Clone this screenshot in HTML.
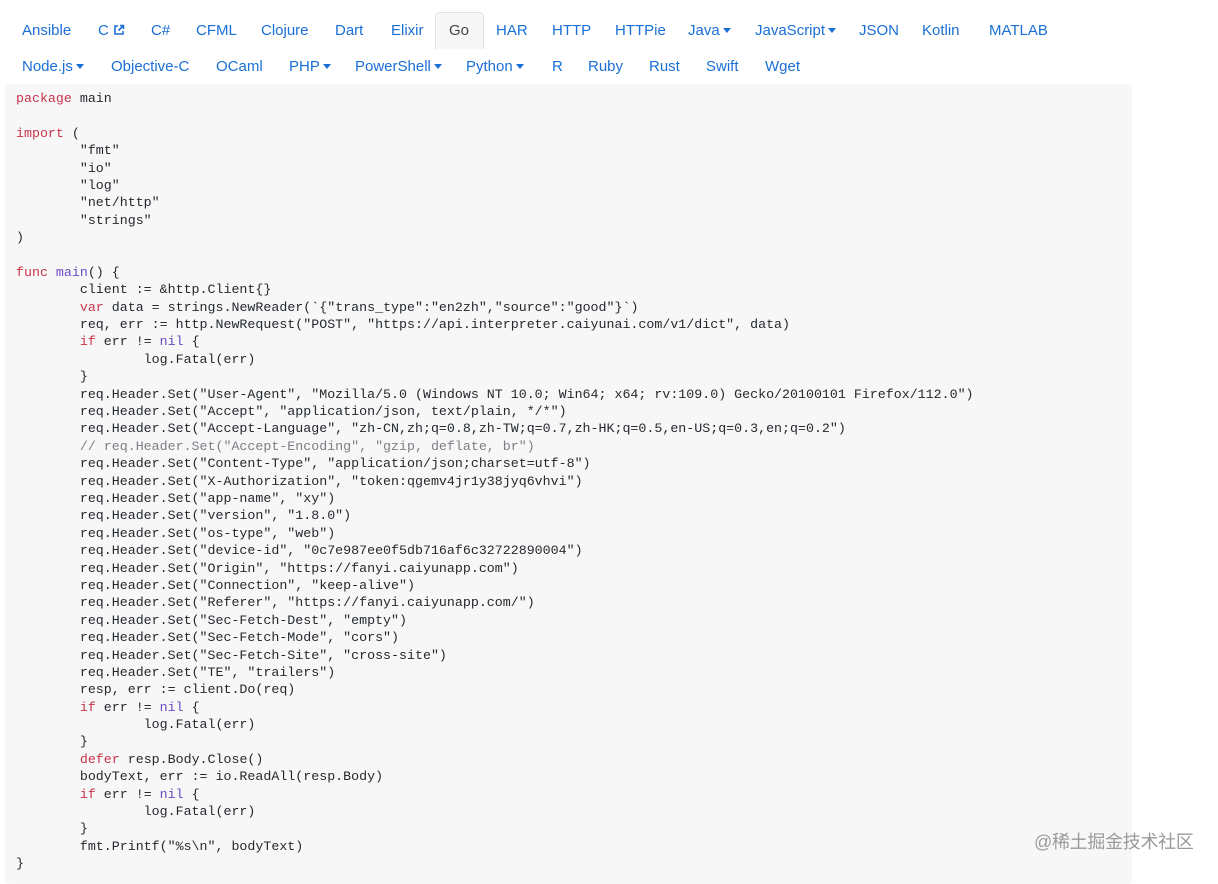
<!DOCTYPE html>
<html><head><meta charset="utf-8"><style>
body{margin:0;width:1218px;height:873px;background:#fff;overflow:hidden;position:relative;font-family:"Liberation Sans","Noto Sans CJK SC",sans-serif}
.n{position:absolute;font-size:15px;color:#1a6fd6;white-space:nowrap;line-height:18px}
.c{position:absolute;left:5px;top:84px;width:1127px;height:800px;background:#f7f7f7;border-radius:4px}
pre{position:absolute;left:16px;top:90px;margin:0;font-family:"Liberation Mono",monospace;font-size:13.3px;line-height:17.39px;color:#24292e;tab-size:8}
.k{color:#c7354a}.p{color:#6a4bc4}.m{color:#7a7f86}
.car{display:inline-block;width:0;height:0;border-left:4px solid transparent;border-right:4px solid transparent;border-top:5px solid #1a6fd6;vertical-align:middle;margin-left:3px;margin-top:-2px}
.go{position:absolute;left:435px;top:12px;width:47px;height:36px;background:#f7f7f7;border:1px solid #dee2e6;border-bottom:none;border-radius:5px 5px 0 0}
.wm{position:absolute;left:1034px;top:828px;font-size:18px;color:#9a9a9a;letter-spacing:-0.3px}
</style></head><body>
<div class="go"></div>
<div class="n" style="left:22px;top:22px">Ansible</div>
<div class="n" style="left:98px;top:22px">C <svg width="12" height="12" viewBox="0 0 12 12" style="vertical-align:-1px"><path d="M5 2H2v8h8V7" fill="none" stroke="#1a6fd6" stroke-width="1.6"/><path d="M7 1.5h3.5V5M10.5 1.5L5.5 6.5" fill="none" stroke="#1a6fd6" stroke-width="1.6"/></svg></div>
<div class="n" style="left:151px;top:22px">C#</div>
<div class="n" style="left:196px;top:22px">CFML</div>
<div class="n" style="left:261px;top:22px">Clojure</div>
<div class="n" style="left:335px;top:22px">Dart</div>
<div class="n" style="left:391px;top:22px">Elixir</div>
<div class="n" style="left:449px;top:22px;color:#444">Go</div>
<div class="n" style="left:496px;top:22px">HAR</div>
<div class="n" style="left:552px;top:22px">HTTP</div>
<div class="n" style="left:615px;top:22px">HTTPie</div>
<div class="n" style="left:688px;top:22px">Java<span class="car"></span></div>
<div class="n" style="left:755px;top:22px">JavaScript<span class="car"></span></div>
<div class="n" style="left:859px;top:22px">JSON</div>
<div class="n" style="left:922px;top:22px">Kotlin</div>
<div class="n" style="left:989px;top:22px">MATLAB</div>
<div class="n" style="left:22px;top:58px">Node.js<span class="car"></span></div>
<div class="n" style="left:111px;top:58px">Objective-C</div>
<div class="n" style="left:216px;top:58px">OCaml</div>
<div class="n" style="left:289px;top:58px">PHP<span class="car"></span></div>
<div class="n" style="left:355px;top:58px">PowerShell<span class="car"></span></div>
<div class="n" style="left:466px;top:58px">Python<span class="car"></span></div>
<div class="n" style="left:552px;top:58px">R</div>
<div class="n" style="left:588px;top:58px">Ruby</div>
<div class="n" style="left:649px;top:58px">Rust</div>
<div class="n" style="left:706px;top:58px">Swift</div>
<div class="n" style="left:765px;top:58px">Wget</div>
<div class="c"></div>
<pre><span class="k">package</span> main

<span class="k">import</span> (
	"fmt"
	"io"
	"log"
	"net/http"
	"strings"
)

<span class="k">func</span> <span class="p">main</span>() {
	client := &amp;http.Client{}
	<span class="k">var</span> data = strings.NewReader(`{"trans_type":"en2zh","source":"good"}`)
	req, err := http.NewRequest("POST", "https://api.interpreter.caiyunai.com/v1/dict", data)
	<span class="k">if</span> err != <span class="p">nil</span> {
		log.Fatal(err)
	}
	req.Header.Set("User-Agent", "Mozilla/5.0 (Windows NT 10.0; Win64; x64; rv:109.0) Gecko/20100101 Firefox/112.0")
	req.Header.Set("Accept", "application/json, text/plain, */*")
	req.Header.Set("Accept-Language", "zh-CN,zh;q=0.8,zh-TW;q=0.7,zh-HK;q=0.5,en-US;q=0.3,en;q=0.2")
	<span class="m">// req.Header.Set("Accept-Encoding", "gzip, deflate, br")</span>
	req.Header.Set("Content-Type", "application/json;charset=utf-8")
	req.Header.Set("X-Authorization", "token:qgemv4jr1y38jyq6vhvi")
	req.Header.Set("app-name", "xy")
	req.Header.Set("version", "1.8.0")
	req.Header.Set("os-type", "web")
	req.Header.Set("device-id", "0c7e987ee0f5db716af6c32722890004")
	req.Header.Set("Origin", "https://fanyi.caiyunapp.com")
	req.Header.Set("Connection", "keep-alive")
	req.Header.Set("Referer", "https://fanyi.caiyunapp.com/")
	req.Header.Set("Sec-Fetch-Dest", "empty")
	req.Header.Set("Sec-Fetch-Mode", "cors")
	req.Header.Set("Sec-Fetch-Site", "cross-site")
	req.Header.Set("TE", "trailers")
	resp, err := client.Do(req)
	<span class="k">if</span> err != <span class="p">nil</span> {
		log.Fatal(err)
	}
	<span class="k">defer</span> resp.Body.Close()
	bodyText, err := io.ReadAll(resp.Body)
	<span class="k">if</span> err != <span class="p">nil</span> {
		log.Fatal(err)
	}
	fmt.Printf("%s\n", bodyText)
}</pre>
<div class="wm">@稀土掘金技术社区</div>
</body></html>
